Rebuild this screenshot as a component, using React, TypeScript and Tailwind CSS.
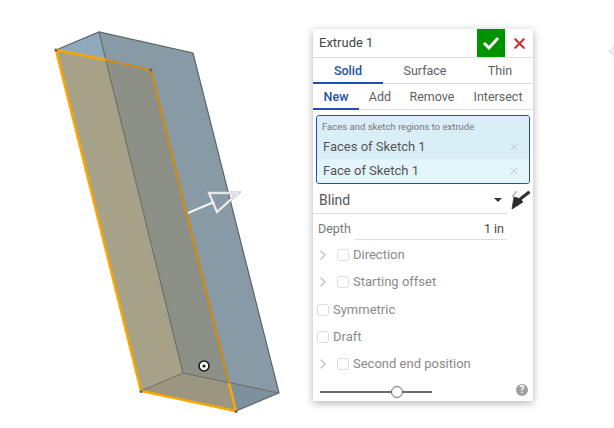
import React from 'react';
import { ChevronRight, X } from 'lucide-react';

const Tick = () => <span className="w-[12px] h-[12px] shrink-0 rounded-[3px] border border-[#dcdcdc] bg-white" />;

const Model = () => (
    <svg width="313" height="428" viewBox="0 0 313 428" className="shrink-0">
        {/* solid faces */}
        <polygon points="56,50 99,32 107,60" fill="#8fa9bc" />
        <polygon points="99,32 193,53 279,393 183,373" fill="#889aa6" />
        <polygon points="183,373 279,393 236,411 141,391" fill="#7d909d" />
        <polygon points="56,50 107,60 183,373 141,391" fill="#a5a288" />
        <polygon points="107,60 151,70 229,381 183,373" fill="#8d9087" />
        <polygon points="183,373 229,382 236,411 141,391" fill="#9a9680" />
        {/* edges */}
        <g fill="none" stroke="#5d6468" strokeWidth="1.2">
            <polyline points="56,50 99,32 193,53 279,393 236,411" />
            <line x1="99" y1="32" x2="183" y2="373" stroke="#6e6f66" />
            <line x1="183" y1="373" x2="279" y2="393" stroke="#6e6f66" />
            <line x1="183" y1="373" x2="141" y2="391" stroke="#7a7460" />
        </g>
        {/* selected sketch outline */}
        <polyline points="107,60 56,50 141,391 236,411" fill="none" stroke="#ffa500" strokeWidth="2.5" />
        <line x1="151" y1="70" x2="106" y2="60" stroke="#cc8a1a" strokeWidth="2.2" />
        <line x1="151" y1="70" x2="229" y2="383" stroke="#cc8a1a" strokeWidth="2.2" />
        <line x1="229" y1="383" x2="236" y2="411" stroke="#ffa500" strokeWidth="2.5" />
        <circle cx="56" cy="50" r="1.5" fill="#5d6468" />
        <circle cx="151" cy="70" r="1.5" fill="#5d6468" />
        <circle cx="141" cy="391.5" r="1.5" fill="#5d6468" />
        <circle cx="236" cy="411.5" r="1.5" fill="#5d6468" />
        {/* manipulator arrow */}
        <polygon points="209,193 238,193 217,212" fill="none" stroke="#b4b8bb" strokeWidth="3" />
        <line x1="188" y1="213" x2="214" y2="202" stroke="#f4f4f4" strokeWidth="2" />
        <polygon points="209,193 238,193 217,212" fill="none" stroke="#f5f5f5" strokeWidth="1.6" />
        {/* mate connector */}
        <circle cx="204" cy="366" r="5" fill="#f7f7f7" stroke="#1a1a1a" strokeWidth="1.6" />
        <circle cx="204" cy="366" r="1.6" fill="#1a1a1a" />
    </svg>
);

const TabRow = ({ items }: { items: { label: string; width: number; active?: boolean }[] }) => (
    <div className="flex h-[26px] border-b border-[#dcdcdc]">
        {items.map((t) => (
            <div
                key={t.label}
                style={{ width: t.width }}
                className={`flex items-center justify-center pt-[2px] text-[12.5px] ${t.active ? 'text-[#1c52a8] font-medium border-b-2 border-[#1c52a8] h-[26px]' : 'text-[#5f5f5f]'}`}
            >
                {t.label}
            </div>
        ))}
    </div>
);

const Option = ({ label, expand }: { label: string; expand?: boolean }) => (
    <div className="flex items-center h-[27px] text-[13px] text-[#8a8a8a] pl-[4px]">
        {expand && <ChevronRight size={16} strokeWidth={2.6} className="text-[#c8c8c8] -ml-[2px] mr-[6px]" />}
        <Tick />
        <span className="ml-[4px]">{label}</span>
    </div>
);

const Selection = ({ label, dark }: { label: string; dark?: boolean }) => (
    <div className={`flex items-center justify-between h-[24px] pl-[6px] pr-[9px] text-[13px] text-[#555] ${dark ? 'bg-[#daeef7]' : 'bg-[#e4f4fb]'}`}>
        <span>{label}</span>
        <X size={12} strokeWidth={1.8} className="text-[#bcc6cb]" />
    </div>
);

export default function App() {
    return (
        <div className="w-[614px] h-[428px] bg-white flex items-start overflow-hidden font-['Roboto',sans-serif]">
            <Model />

            <div className="w-[220px] h-[372px] mt-[29px] shrink-0 bg-white shadow-[0_2px_8px_rgba(0,0,0,0.3)] flex flex-col">
                <div className="flex items-center h-[29px] border-b border-[#dcdcdc] shrink-0">
                    <span className="flex-1 pl-[6px] text-[13px] text-[#444]">Extrude 1</span>
                    <div className="w-[28px] h-[28px] bg-[#009300] flex items-center justify-center">
                        <svg width="18" height="14" viewBox="0 0 18 14">
                            <path d="M2 7l5 5 9-10" fill="none" stroke="#fff" strokeWidth="3" />
                        </svg>
                    </div>
                    <div className="w-[28px] flex items-center justify-center">
                        <X size={17} strokeWidth={3.2} className="text-[#c8363f]" />
                    </div>
                </div>

                <TabRow items={[
                    { label: 'Solid', width: 70, active: true },
                    { label: 'Surface', width: 84 },
                    { label: 'Thin', width: 66 },
                ]} />
                <TabRow items={[
                    { label: 'New', width: 46, active: true },
                    { label: 'Add', width: 42 },
                    { label: 'Remove', width: 62 },
                    { label: 'Intersect', width: 70 },
                ]} />

                <div className="mx-[3px] mt-[5px] h-[69px] rounded-[3px] border border-[#1c52a8] bg-[#e4f4fb] overflow-hidden shrink-0">
                    <div className="h-[19px] bg-[#daeef7] pl-[5px] pt-[5px] text-[9.5px] leading-[12px] text-[#777]">Faces and sketch regions to extrude</div>
                    <Selection label="Faces of Sketch 1" dark />
                    <Selection label="Face of Sketch 1" />
                </div>

                <div className="flex items-center h-[30px]">
                    <div className="w-[194px] h-[30px] shrink-0 border-b border-[#dcdcdc] flex items-center justify-between pt-[3px] pl-[6px] pr-[5px] text-[14px] text-[#555]">
                        <span>Blind</span>
                        <span className="w-0 h-0 border-x-[4px] border-x-transparent border-t-[4px] border-t-[#333]" />
                    </div>
                    <svg width="24" height="24" viewBox="0 0 24 24" className="ml-[2px] shrink-0">
                        <line x1="3" y1="10" x2="8" y2="4" stroke="#b5b5b5" strokeWidth="1.6" />
                        <path d="M3 22L5 10l5 1.5L19.5 4 21 6l-9 7 2 2z" fill="#2c2c2c" stroke="#2c2c2c" strokeWidth="0.8" />
                    </svg>
                </div>

                <div className="flex items-end h-[26px] w-[194px] pl-[5px] text-[12.5px] text-[#777]">
                    <span className="w-[37px] pb-[1px]">Depth</span>
                    <span className="flex-1 text-right border-b border-[#dcdcdc] pr-[3px] text-[#444]">1 in</span>
                </div>

                <div className="mt-[1px] flex flex-col">
                    <Option label="Direction" expand />
                    <Option label="Starting offset" expand />
                    <div className="mt-[1px]">
                        <Option label="Symmetric" />
                    </div>
                    <Option label="Draft" />
                    <Option label="Second end position" expand />
                </div>

                <div className="flex items-center justify-between pl-[7px] pr-[5px] mt-[7px]">
                    <div className="w-[112px] h-[2px] mt-[4px] bg-[#6a6a6a] relative">
                        <span className="absolute left-[71px] -top-[5px] w-[12px] h-[12px] rounded-full bg-white border border-[#6a6a6a]" />
                    </div>
                    <span className="w-[12px] h-[12px] rounded-full bg-[#a0a0a0] text-white text-[10px] font-bold leading-[12px] text-center">?</span>
                </div>
            </div>

            <svg width="6" height="13" viewBox="0 0 6 13" className="ml-[75px] mt-[45px] shrink-0">
                <polygon points="0,6.5 6,0 6,13" fill="#e6eef4" />
            </svg>
        </div>
    );
}
